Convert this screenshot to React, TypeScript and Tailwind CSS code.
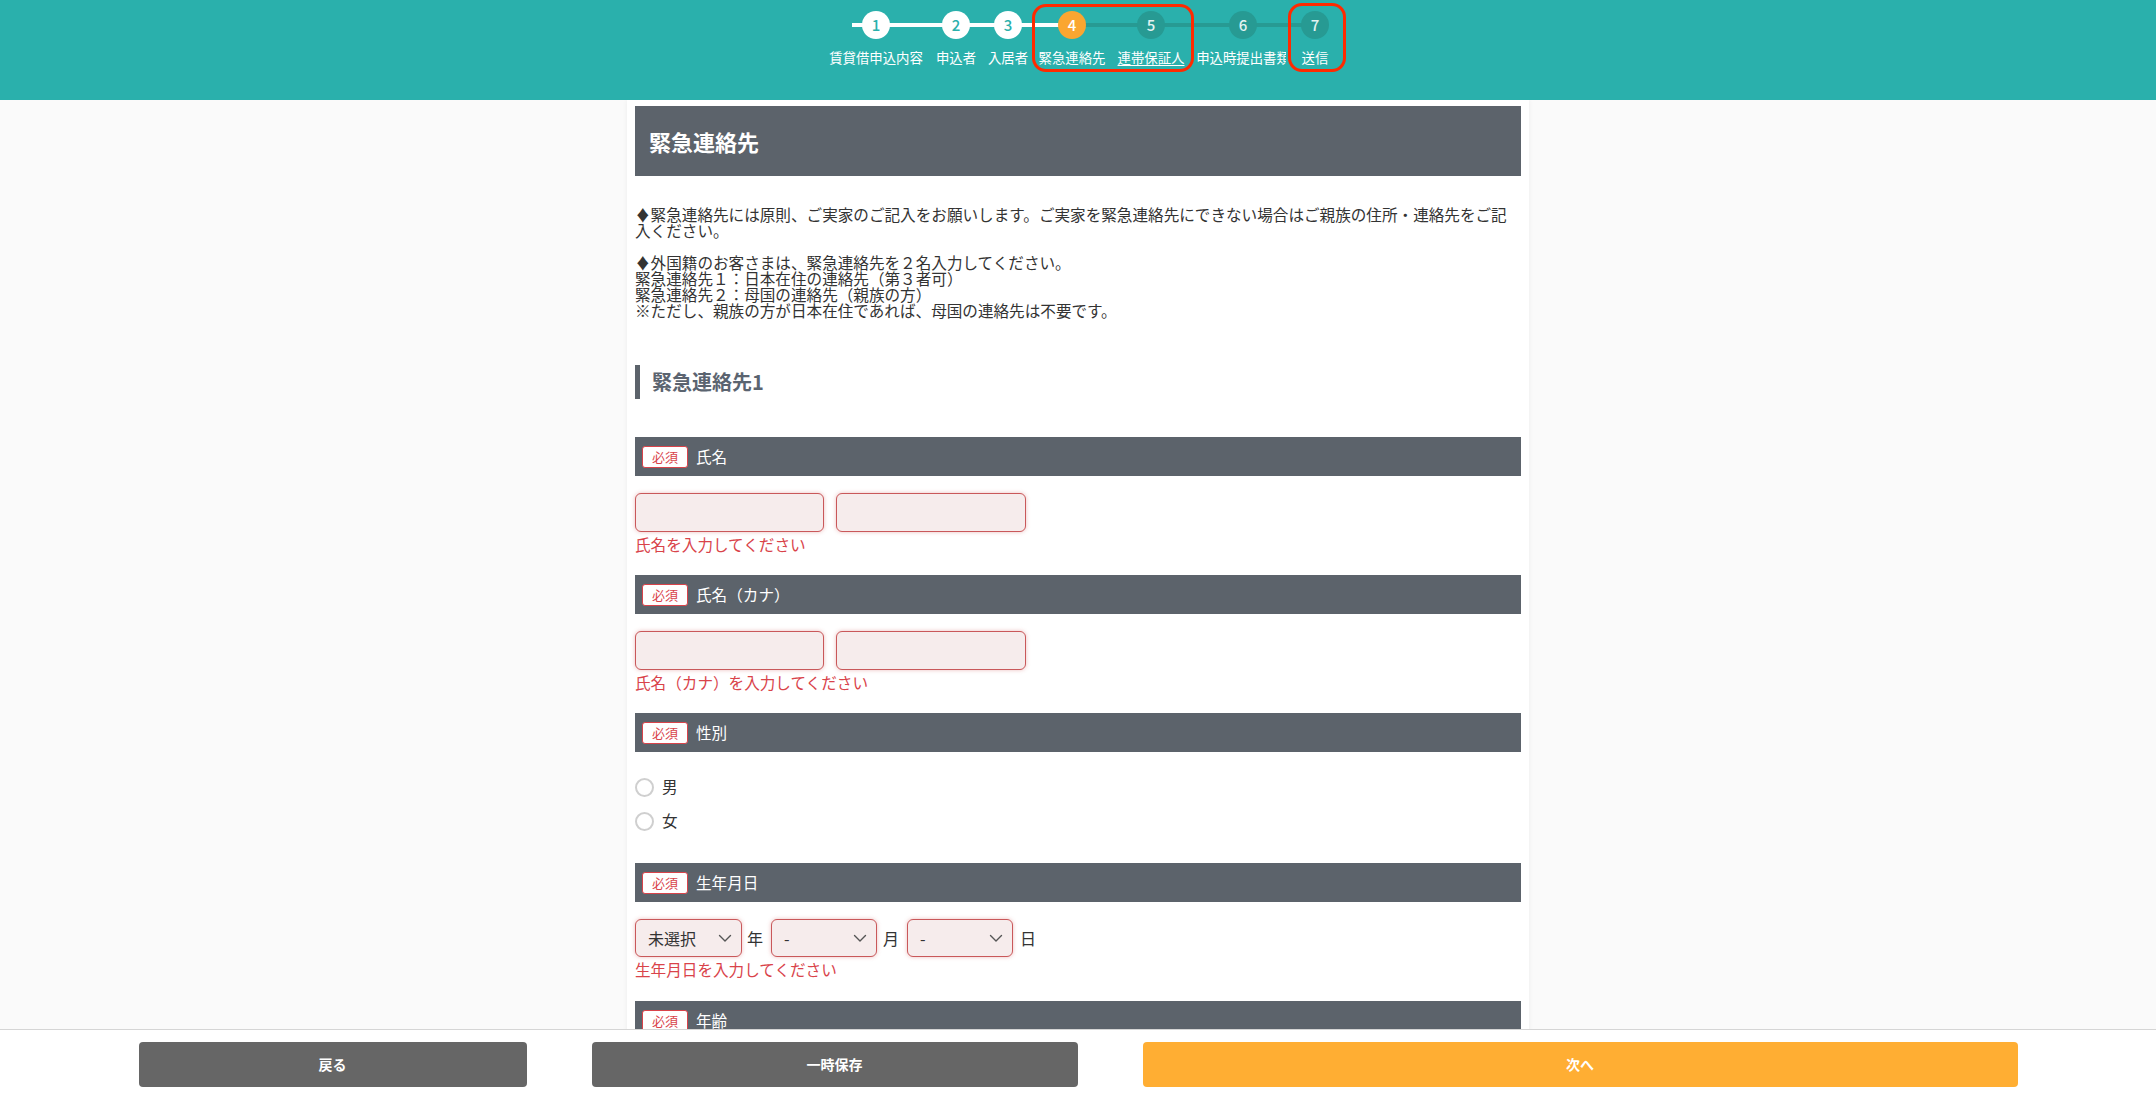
import React from 'react';

type StepState = 'done' | 'current' | 'todo';
const steps: { n: number; label: string; ml: string; state: StepState; underline?: boolean; cover?: boolean }[] = [
  { n: 1, label: '賃貸借申込内容', ml: 'ml-0', state: 'done' },
  { n: 2, label: '申込者', ml: 'ml-[80px]', state: 'done' },
  { n: 3, label: '入居者', ml: 'ml-[52px]', state: 'done' },
  { n: 4, label: '緊急連絡先', ml: 'ml-[64px]', state: 'current' },
  { n: 5, label: '連帯保証人', ml: 'ml-[79px]', state: 'todo', underline: true },
  { n: 6, label: '申込時提出書類', ml: 'ml-[92px]', state: 'todo' },
  { n: 7, label: '送信', ml: 'ml-[72px]', state: 'todo', cover: true },
];

function Circle({ n, state }: { n: number; state: StepState }) {
  const cls =
    state === 'done'
      ? 'bg-white text-[#2ab0ac]'
      : state === 'current'
      ? 'bg-[#faa631] text-white'
      : 'bg-[#279a93] text-[#e3f3f2]';
  return (
    <div className={`relative z-10 flex h-[28px] w-[28px] shrink-0 items-center justify-center rounded-full text-[15px] font-medium ${cls}`}>
      {n}
    </div>
  );
}

function Stepper() {
  return (
    <div className="relative ml-[876px] flex">
      <div className="absolute left-[-24px] top-[12px] h-[4px] w-[220px] bg-white" />
      <div className="absolute left-[196px] top-[12px] h-[4px] w-[243px] bg-[#279a93]" />
      {steps.map((s) => (
        <div key={s.n} className={`flex w-0 flex-col items-center ${s.ml}`}>
          <Circle n={s.n} state={s.state} />
          <div
            className={`relative mt-[9px] shrink-0 whitespace-nowrap text-[13.4px] leading-[18px] text-white ${
              s.underline ? 'underline underline-offset-2' : ''
            } ${s.cover ? 'z-10 bg-[#2ab0ac] px-4' : ''}`}
          >
            {s.label}
          </div>
        </div>
      ))}
      <div className="pointer-events-none absolute left-[156px] top-[-7px] z-20 h-[68px] w-[162px] rounded-[14px] border-[3px] border-[#ff2a00]" />
      <div className="pointer-events-none absolute left-[412px] top-[-8px] z-20 h-[69px] w-[58px] rounded-[14px] border-[3px] border-[#ff2a00]" />
    </div>
  );
}

function FieldHeader({ label }: { label: string }) {
  return (
    <div className="flex h-[39px] items-center bg-[#5c636b] pl-[7px]">
      <span className="flex h-[22px] w-[46px] items-center justify-center rounded-[3px] border-[1.5px] border-[#d9434a] bg-white text-[13px] text-[#d9434a]">
        必須
      </span>
      <span className="ml-[8px] text-[15.6px] text-white">{label}</span>
    </div>
  );
}

const errField =
  'rounded-[6px] border border-[#c9585a] bg-[#f6ecec] shadow-[0_0_4px_rgba(201,70,70,0.35)]';

function TextInputs() {
  return (
    <div className="flex gap-[12px] pt-[17px]">
      <div className={`h-[39px] w-[189px] ${errField}`} />
      <div className={`h-[39px] w-[190px] ${errField}`} />
    </div>
  );
}

function ErrorText({ text }: { text: string }) {
  return <div className="mt-[3px] text-[15.6px] leading-[19px] text-[#d9434a]">{text}</div>;
}

function Chevron() {
  return (
    <svg width="14" height="9" viewBox="0 0 14 9" fill="none" stroke="#555" strokeWidth="1.4" strokeLinecap="round" strokeLinejoin="round">
      <path d="M1.5 1.5 L7 7 L12.5 1.5" />
    </svg>
  );
}

function Select({ value, w }: { value: string; w: string }) {
  return (
    <div className={`flex h-[38px] items-center justify-between pl-[12px] pr-[9px] ${w} ${errField}`}>
      <span className="text-[16px] text-[#333]">{value}</span>
      <Chevron />
    </div>
  );
}

function Radio({ label }: { label: string }) {
  return (
    <div className="flex h-[24px] items-center">
      <span className="h-[19px] w-[19px] rounded-full border-[2px] border-[#cfcfcf] bg-white" />
      <span className="ml-[8px] text-[15.6px] text-[#333]">{label}</span>
    </div>
  );
}

export default function App() {
  return (
    <div className="flex h-screen flex-col overflow-hidden bg-[#fafafa] [font-family:'Noto_Sans_CJK_JP','Noto_Sans',sans-serif]">
      <header className="h-[100px] shrink-0 bg-[#2ab0ac] pt-[11px]">
        <Stepper />
      </header>

      <main className="min-h-0 flex-1 overflow-hidden">
        <div className="mx-auto min-h-full w-[902px] bg-white px-[8px] pt-[6px] shadow-[0_0_5px_rgba(0,0,0,0.06)]">
          <div className="flex h-[70px] items-center bg-[#5c636b] pl-[14px] text-[22px] font-bold text-white">
            緊急連絡先
          </div>

          <div className="mt-[30px] text-[15.6px] leading-[16px] text-[#333]">
            <p>♦緊急連絡先には原則、ご実家のご記入をお願いします。ご実家を緊急連絡先にできない場合はご親族の住所・連絡先をご記入ください。</p>
            <p className="mt-[16px]">
              ♦外国籍のお客さまは、緊急連絡先を２名入力してください。
              <br />
              緊急連絡先１：日本在住の連絡先（第３者可）
              <br />
              緊急連絡先２：母国の連絡先（親族の方）
              <br />
              ※ただし、親族の方が日本在住であれば、母国の連絡先は不要です。
            </p>
          </div>

          <div className="mt-[47px] flex h-[34px] items-center border-l-[5px] border-[#5c636b] pl-[12px] text-[20px] font-bold text-[#5b6470]">
            緊急連絡先1
          </div>

          <div className="mt-[38px]">
            <FieldHeader label="氏名" />
            <TextInputs />
            <ErrorText text="氏名を入力してください" />
          </div>

          <div className="mt-[21px]">
            <FieldHeader label="氏名（カナ）" />
            <TextInputs />
            <ErrorText text="氏名（カナ）を入力してください" />
          </div>

          <div className="mt-[21px]">
            <FieldHeader label="性別" />
            <div className="flex flex-col gap-[10px] pt-[23px]">
              <Radio label="男" />
              <Radio label="女" />
            </div>
          </div>

          <div className="mt-[30px]">
            <FieldHeader label="生年月日" />
            <div className="flex items-center pt-[17px] text-[16px] text-[#333]">
              <Select value="未選択" w="w-[107px]" />
              <span className="ml-[5px] mr-[8px]">年</span>
              <Select value="-" w="w-[106px]" />
              <span className="ml-[6px] mr-[8px]">月</span>
              <Select value="-" w="w-[106px]" />
              <span className="ml-[7px]">日</span>
            </div>
            <ErrorText text="生年月日を入力してください" />
          </div>

          <div className="mt-[22px]">
            <FieldHeader label="年齢" />
            <div className="h-[60px]" />
          </div>
        </div>
      </main>

      <footer className="flex h-[67px] shrink-0 justify-center gap-[65px] border-t border-[#d5d5d5] bg-white pt-[12px]">
        <button className="h-[45px] w-[388px] rounded-[4px] bg-[#666666] text-[14px] font-bold text-white">戻る</button>
        <button className="h-[45px] w-[486px] rounded-[4px] bg-[#666666] text-[14px] font-bold text-white">一時保存</button>
        <button className="h-[45px] w-[875px] rounded-[4px] bg-[#ffae33] text-[14px] font-bold text-white">次へ</button>
      </footer>
    </div>
  );
}
